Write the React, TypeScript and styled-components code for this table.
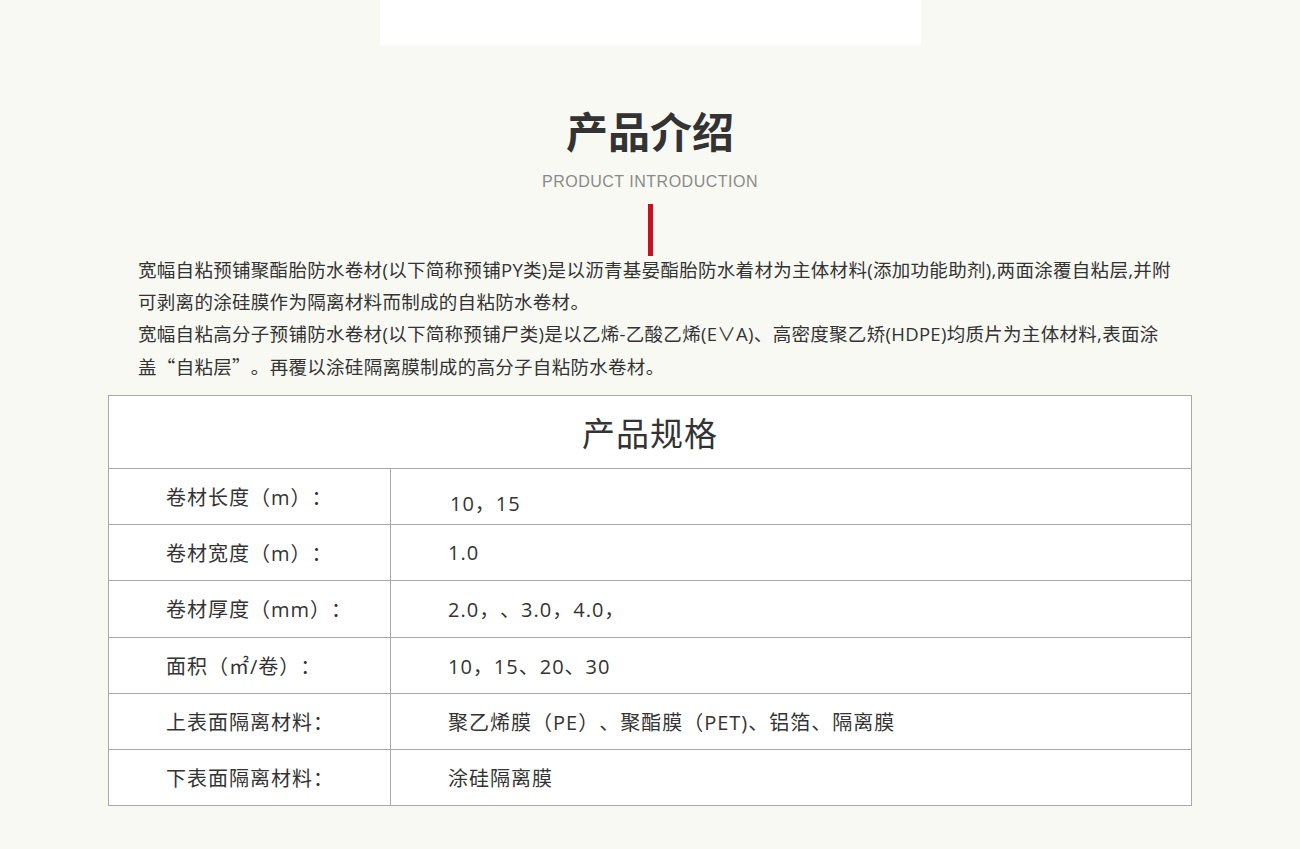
import React from "react";
import styled, { createGlobalStyle } from "styled-components";

const Global = createGlobalStyle`
  html, body { margin: 0; padding: 0; background: #f9f9f4; }
  body {
    font-family: "Open Sans", "Noto Sans CJK SC", sans-serif;
    color: #333;
    text-spacing-trim: space-all;
  }
`;

const Page = styled.div`
  width: 1300px;
  height: 849px;
  overflow: hidden;
  display: flex;
  flex-direction: column;
  align-items: center;
`;

const TopCard = styled.div`
  width: 541px;
  height: 45px;
  background: #ffffff;
  margin-left: 1px;
`;

const Title = styled.h1`
  margin: 56px 0 0;
  font-family: "Noto Sans CJK SC", sans-serif;
  font-size: 42px;
  line-height: 58px;
  font-weight: 700;
  color: #333;
`;

const Subtitle = styled.div`
  margin-top: 13px;
  font-family: "Liberation Sans", Arial, sans-serif;
  font-size: 16px;
  line-height: 20px;
  letter-spacing: 0.5px;
  color: #8a8a8a;
`;

const RedBar = styled.div`
  width: 5px;
  height: 52px;
  margin-top: 12px;
  margin-left: 1px;
  background: #c8101e;
`;

const Intro = styled.div`
  align-self: flex-start;
  margin-left: 138px;
  margin-top: -2px;
  width: 1060px;
  font-size: 18.5px;
  letter-spacing: 0.3px;
  line-height: 32px;
  color: #333;
  white-space: nowrap;
`;

const Para = styled.p`
  margin: 0;
`;

const Quote = styled.span`
  font-family: "Noto Sans CJK SC", sans-serif;
  font-feature-settings: "fwid";
`;

const Table = styled.div`
  width: 1082px;
  margin-top: 12px;
  border: 1px solid #a9a9a9;
  background: #fff;
`;

const Head = styled.div`
  height: 72px;
  display: flex;
  align-items: center;
  justify-content: center;
  font-family: "Noto Sans CJK SC", sans-serif;
  font-size: 33px;
  letter-spacing: 1px;
  color: #333;
  border-bottom: 1px solid #a9a9a9;
`;

const Row = styled.div<{ $last?: boolean }>`
  display: grid;
  grid-template-columns: 282px 1fr;
  height: 55.2px;
  border-bottom: ${(p) => (p.$last ? "none" : "1px solid #a9a9a9")};
`;

const Label = styled.div`
  display: flex;
  align-items: center;
  padding-left: 57px;
  font-size: 20px;
  letter-spacing: 1px;
  color: #333;
  border-right: 1px solid #a9a9a9;
`;

const Value = styled.div<{ $shift?: boolean }>`
  display: flex;
  align-items: center;
  padding-left: ${(p) => (p.$shift ? "59px" : "57px")};
  padding-top: ${(p) => (p.$shift ? "11px" : "0")};
  font-size: 20px;
  letter-spacing: 1px;
  color: #333;
`;

const rows: [string, string][] = [
  ["卷材长度（m）：", "10，15"],
  ["卷材宽度（m）：", "1.0"],
  ["卷材厚度（mm）：", "2.0，、3.0，4.0，"],
  ["面积（㎡/卷）：", "10，15、20、30"],
  ["上表面隔离材料：", "聚乙烯膜（PE）、聚酯膜（PET)、铝箔、隔离膜"],
  ["下表面隔离材料：", "涂硅隔离膜"],
];

export default function App() {
  return (
    <Page>
      <Global />
      <TopCard />
      <Title>产品介绍</Title>
      <Subtitle>PRODUCT INTRODUCTION</Subtitle>
      <RedBar />
      <Intro>
        <Para>
          宽幅自粘预铺聚酯胎防水卷材(以下简称预铺PY类)是以沥青基晏酯胎防水着材为主体材料(添加功能助剂),两面涂覆自粘层,并附
          <br />
          可剥离的涂硅膜作为隔离材料而制成的自粘防水卷材。
        </Para>
        <Para>
          宽幅自粘高分子预铺防水卷材(以下简称预铺尸类)是以乙烯-乙酸乙烯(E∨A)、高密度聚乙矫(HDPE)均质片为主体材料,表面涂
          <br />
          盖<Quote>“</Quote>自粘层<Quote>”</Quote>。再覆以涂硅隔离膜制成的高分子自粘防水卷材。
        </Para>
      </Intro>
      <Table>
        <Head>产品规格</Head>
        {rows.map(([l, v], i) => (
          <Row key={i} $last={i === rows.length - 1}>
            <Label>{l}</Label>
            <Value $shift={i === 0}>{v}</Value>
          </Row>
        ))}
      </Table>
    </Page>
  );
}
